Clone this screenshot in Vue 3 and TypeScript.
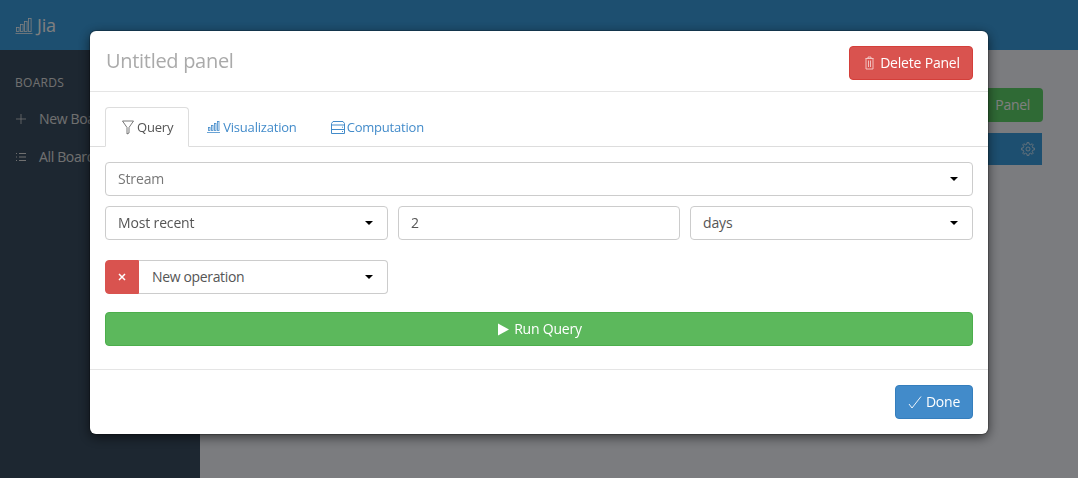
<script setup lang="ts">
const barHeights = [4, 7, 10, 13]

// eight-toothed gear outline for the panel settings icon
const gearPath = (() => {
  const teeth = 8
  const parts: string[] = []
  for (let i = 0; i < teeth; i++) {
    const a = (i / teeth) * Math.PI * 2
    const step = Math.PI / teeth
    const pts: [number, number][] = [
      [5, a - step * 0.55],
      [6.7, a - step * 0.3],
      [6.7, a + step * 0.3],
      [5, a + step * 0.55],
    ]
    pts.forEach(([r, t]) => {
      const x = (7 + r * Math.cos(t)).toFixed(2)
      const y = (7 + r * Math.sin(t)).toFixed(2)
      parts.push(`${parts.length ? 'L' : 'M'}${x} ${y}`)
    })
  }
  return parts.join(' ') + 'Z'
})()
</script>

<template>
  <div class="app">
    <header class="topbar">
      <svg class="bars-icon" width="18" height="17" viewBox="0 0 18 17" fill="none" stroke="currentColor" stroke-width="0.8">
        <rect v-for="(h, i) in barHeights" :key="i" :x="1.5 + i * 4" :y="14.5 - h" width="2.6" :height="h" />
        <path d="M0.5 16.500h17" />
      </svg>
      <span class="brand">Jia</span>
    </header>

    <div class="body">
      <aside class="sidebar">
        <div class="side-title">BOARDS</div>
        <div class="side-item">
          <svg width="12" height="12" viewBox="0 0 12 12" stroke="currentColor" stroke-width="0.8" fill="none"><path d="M6 1v10M1 6h10" /></svg>
          <span>New Board</span>
        </div>
        <div class="side-item">
          <svg width="12" height="12" viewBox="0 0 12 12" stroke="currentColor" fill="none"><path d="M1 2.500h1M4 2.500h7M1 6h1M4 6h7M1 9.500h1M4 9.500h7" /></svg>
          <span>All Boards</span>
        </div>
      </aside>

      <main class="main">
        <button class="btn-add">
          <svg width="12" height="12" viewBox="0 0 12 12" stroke="currentColor" fill="none"><path d="M6 1v10M1 6h10" /></svg>
          Panel
        </button>
        <div class="panel-bar">
          <svg width="14" height="14" viewBox="0 0 14 14" fill="none" stroke="currentColor" stroke-width="0.7">
            <circle cx="7" cy="7" r="2" />
            <path :d="gearPath" />
          </svg>
        </div>
      </main>
    </div>

    <div class="backdrop"></div>

    <div class="modal-wrap">
      <section class="modal">
        <div class="modal-head">
          <h4 class="modal-title">Untitled panel</h4>
          <button class="btn btn-red">
            <svg class="dim-icon" width="11" height="14" viewBox="0 0 11 14" fill="none" stroke="currentColor" stroke-width="0.8">
              <path d="M1.500 2.500h8M4 2.500V1h3v1.500M2 2.500v10.500h7V2.500M4.500 4.500v6.500M6.500 4.500v6.500" />
            </svg>
            Delete Panel
          </button>
        </div>

        <div class="modal-body">
          <nav class="tabs">
            <div class="tab active">
              <svg width="14" height="15" viewBox="0 0 14 15" fill="none" stroke="currentColor" stroke-width="0.8">
                <path d="M1.500 1h11L8 7.500v5.500l-2 1V7.500z" />
              </svg>
              Query
            </div>
            <div class="tab">
              <svg width="13" height="12" viewBox="0 0 13 12" fill="none" stroke="currentColor" stroke-width="0.8">
                <rect x="1.500" y="6.500" width="1.500" height="3" />
                <rect x="4.500" y="4.500" width="1.500" height="5" />
                <rect x="7.500" y="2.500" width="1.500" height="7" />
                <rect x="10.500" y=".5" width="1.500" height="9" />
                <path d="M0 11.500h13" />
              </svg>
              Visualization
            </div>
            <div class="tab tab-tight">
              <svg width="14" height="13" viewBox="0 0 14 13" fill="none" stroke="currentColor">
                <path d="M2 .5h10l1.500 2v10H.5v-10zM.5 4h13M.5 8.500h13M11 6.200h1M11 10.500h1" />
              </svg>
              Computation
            </div>
          </nav>

          <div class="form">
            <div class="field field-muted">Stream<i class="caret"></i></div>
            <div class="row-3">
              <div class="field">Most recent<i class="caret"></i></div>
              <input class="field field-input" value="2" />
              <div class="field">days<i class="caret"></i></div>
            </div>
            <div class="op-row">
              <button class="op-remove">
                <svg width="8" height="8" viewBox="0 0 8 8" stroke="#fff" stroke-width="1.500"><path d="M1 1l6 6M7 1l-6 6" /></svg>
              </button>
              <div class="field op-field">New operation<i class="caret"></i></div>
            </div>
            <button class="btn btn-run">
              <svg width="11" height="13" viewBox="0 0 11 13" fill="#fff"><path d="M0 .5l11 6-11 6z" /></svg>
              Run Query
            </button>
          </div>
        </div>

        <div class="modal-foot">
          <button class="btn btn-blue">
            <svg width="14" height="13" viewBox="0 0 14 13" fill="none" stroke="currentColor" stroke-width="0.9"><path d="M1 8l3 4 9-11.500" /></svg>
            Done
          </button>
        </div>
      </section>
    </div>
  </div>
</template>

<style>
html,
body {
  margin: 0;
  overflow: hidden;
}
</style>

<style scoped>
.app {
  width: 1078px;
  height: 478px;
  display: flex;
  flex-direction: column;
  font-family: "Open Sans", sans-serif;
  font-size: 14px;
  line-height: 20px;
  letter-spacing: -0.15px;
  color: #555;
  overflow: hidden;
  background: #f6f8ff;
}

.topbar {
  height: 50px;
  flex: none;
  background: #3a9ee0;
  color: #fff;
  display: flex;
  align-items: center;
  gap: 4px;
  padding: 0 15px;
}

.brand {
  font-size: 18px;
  line-height: 50px;
}

.body {
  flex: 1;
  display: flex;
  min-height: 0;
}

.sidebar {
  width: 200px;
  flex: none;
  background: #3a4e62;
  color: #e0e0e0;
  padding: 24px 15px 0;
  box-sizing: border-box;
}

.side-title {
  font-size: 12px;
  letter-spacing: 0.3px;
  line-height: 18px;
  margin-bottom: 8px;
}

.side-item {
  display: flex;
  align-items: center;
  gap: 12px;
  height: 38px;
  letter-spacing: -0.35px;
  white-space: nowrap;
}

.main {
  flex: 1;
  padding: 38px 35px 0 0;
  display: flex;
  flex-direction: column;
  align-items: flex-end;
  gap: 11px;
}

.btn-add {
  height: 34px;
  width: 120px;
  border: 0;
  border-radius: 4px;
  background: #5fd46a;
  color: #fff;
  font: inherit;
  letter-spacing: -0.3px;
  padding: 0 13px;
  display: flex;
  align-items: center;
  justify-content: flex-end;
  gap: 6px;
}

.panel-bar {
  width: 400px;
  height: 32px;
  margin-right: 1px;
  background: #3a9ee0;
  color: #fff;
  display: flex;
  align-items: center;
  justify-content: flex-end;
  padding-right: 7px;
  box-sizing: border-box;
}

.backdrop {
  position: fixed;
  inset: 0;
  background: #000;
  opacity: 0.5;
}

.modal-wrap {
  position: fixed;
  inset: 0;
  padding: 31px 0 0 90px;
}

.modal {
  width: 898px;
  height: 403px;
  background: #fff;
  border-radius: 6px;
  box-shadow: 0 0 0 1px rgba(0, 0, 0, 0.2), 0 3px 12px rgba(0, 0, 0, 0.6);
  display: flex;
  flex-direction: column;
}

.modal-head {
  height: 61px;
  box-sizing: border-box;
  flex: none;
  display: flex;
  align-items: center;
  justify-content: space-between;
  padding: 0 15px 0 16px;
  border-bottom: 1px solid #e5e5e5;
}

.modal-title {
  margin: 0;
  font-size: 20px;
  font-weight: 400;
  letter-spacing: -0.3px;
  color: #aaa;
}

.modal-body {
  flex: 1;
  padding-top: 15px;
  border-bottom: 1px solid #e5e5e5;
}

.tabs {
  display: flex;
  height: 40px;
  box-sizing: border-box;
  padding-left: 15px;
  border-bottom: 1px solid #ddd;
  gap: 2px;
}

.tab {
  height: 40px;
  box-sizing: border-box;
  padding: 0 15px;
  display: flex;
  align-items: center;
  gap: 3px;
  color: #428bca;
  font-size: 13px;
  letter-spacing: -0.2px;
  white-space: nowrap;
  border: 1px solid transparent;
  border-radius: 4px 4px 0 0;
}

.tab-tight {
  gap: 2px;
}

.tab.active {
  gap: 2px;
  color: #555;
  background: #fff;
  border-color: #ddd #ddd #fff;
}

.form {
  margin: 15px 15px 0;
  display: flex;
  flex-direction: column;
  gap: 10px;
}

.field {
  height: 34px;
  box-sizing: border-box;
  border: 1px solid #ccc;
  border-radius: 4px;
  padding: 0 12px;
  display: flex;
  align-items: center;
  justify-content: space-between;
  font: inherit;
  letter-spacing: -0.15px;
  color: #555;
  background: #fff;
  min-width: 0;
  width: 100%;
}

.field-input {
  padding-bottom: 1px;
}

.field-muted {
  color: #777;
}

.caret {
  border-top: 4px solid #000;
  border-left: 4px solid transparent;
  border-right: 4px solid transparent;
  margin-right: 2px;
}

.row-3 {
  display: grid;
  grid-template-columns: 283px 282px 283px;
  gap: 10px;
}

.op-row {
  display: flex;
  width: 283px;
  margin-top: 10px;
}

.op-remove {
  width: 34px;
  height: 34px;
  flex: none;
  border: 1px solid #d9534f;
  background: #d9534f;
  border-radius: 4px 0 0 4px;
  padding: 0;
  display: flex;
  align-items: center;
  justify-content: center;
}

.op-field {
  border-left: 0;
  border-radius: 0 4px 4px 0;
  padding-left: 13px;
  letter-spacing: -0.35px;
}

.btn {
  height: 34px;
  box-sizing: border-box;
  border-radius: 4px;
  border: 1px solid;
  color: #fff;
  font: inherit;
  letter-spacing: -0.2px;
  white-space: nowrap;
  display: inline-flex;
  align-items: center;
  justify-content: center;
  gap: 5px;
  padding: 0;
}

.btn-red {
  width: 124px;
  margin-top: 4px;
  padding-left: 2px;
  background: #d9534f;
  border-color: #d43f3a;
}

.dim-icon {
  opacity: 0.8;
}

.btn-run {
  width: 100%;
  margin-top: 8px;
  padding-left: 2px;
  background: #5cb85c;
  border-color: #4cae4c;
}

.btn-blue {
  width: 78px;
  gap: 4px;
  background: #428bca;
  border-color: #357ebd;
}

.modal-foot {
  height: 64px;
  flex: none;
  display: flex;
  align-items: center;
  justify-content: flex-end;
  padding: 0 15px;
}
</style>
